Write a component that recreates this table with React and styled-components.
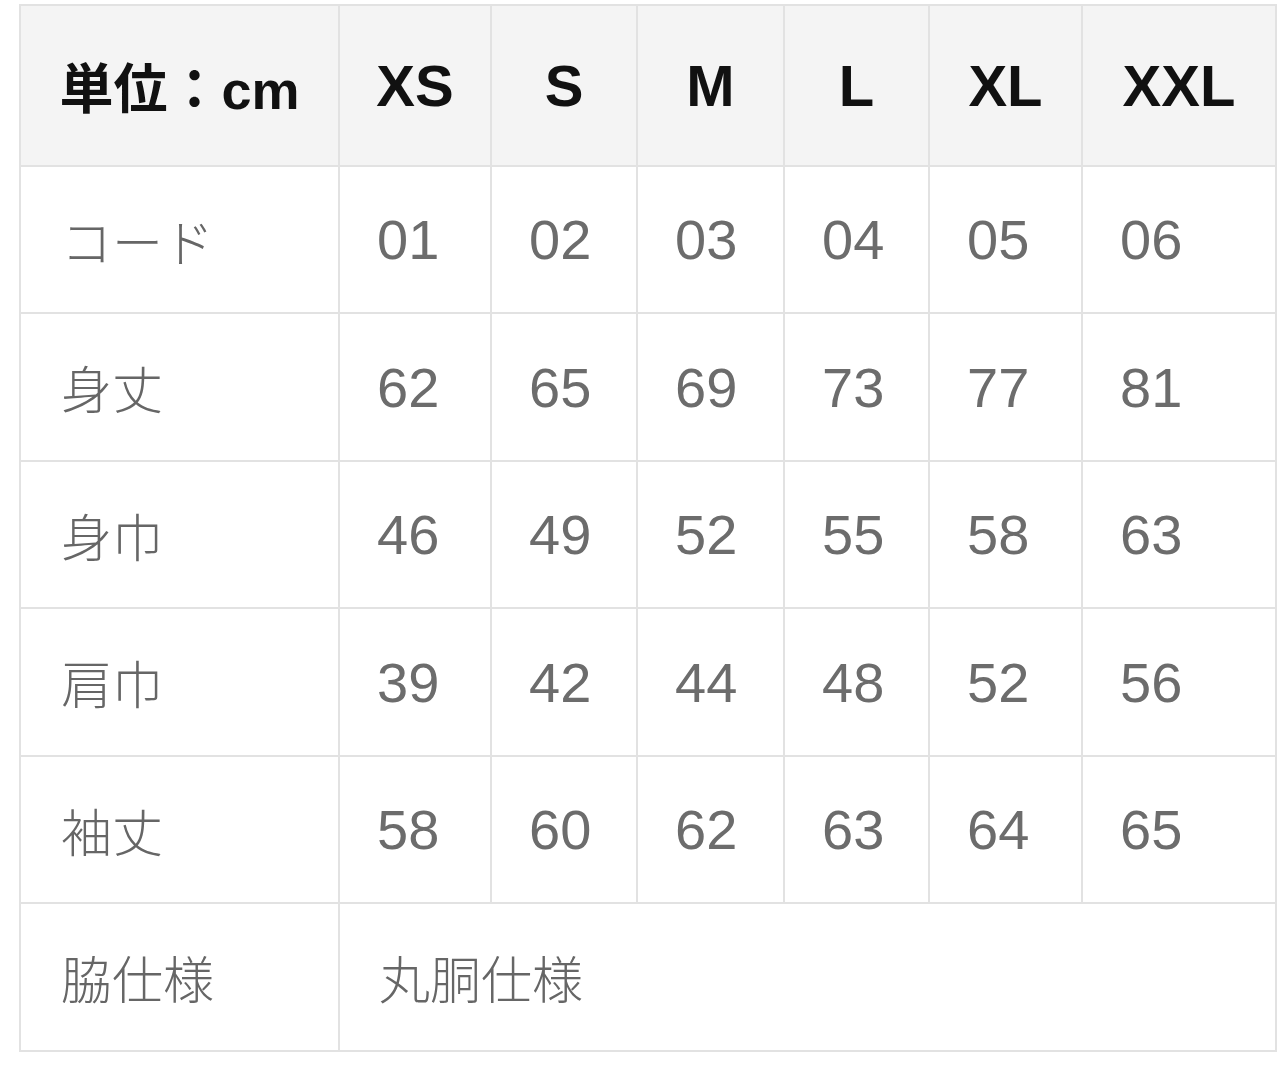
import React from 'react';
import styled, { createGlobalStyle } from 'styled-components';

const GlobalStyle = createGlobalStyle`
  body {
    margin: 0;
    background: #ffffff;
    font-family: "Liberation Sans", "Noto Sans CJK JP", sans-serif;
  }
`

const Wrapper = styled.div`
  padding: 4px 0 0 19px;
`

const SizeTable = styled.table`
  width: 1256px;
  table-layout: fixed;
  border-collapse: collapse;
  border: 2px solid #e2e2e2;
`

const HeadRow = styled.tr`
  height: 161px;
  background: #f4f4f4;
`

const BodyRow = styled.tr`
  height: ${props => props.h}px;
  background: #ffffff;
`

const HeadCell = styled.th`
  border: 2px solid #e2e2e2;
  padding: 0;
  text-align: center;
  font-family: "Liberation Sans", "Noto Sans CJK JP", sans-serif;
  font-weight: bold;
  font-size: ${props => props.small ? 54 : 58}px;
  color: #111;
  white-space: nowrap;
`

const LabelCell = styled.td`
  border: 2px solid #e2e2e2;
  padding: 0 0 0 40px;
  text-align: left;
  font-family: "Noto Sans CJK JP", sans-serif;
  font-weight: 300;
  font-size: 51px;
  color: #666;
  white-space: nowrap;
`

const ValueCell = styled.td`
  border: 2px solid #e2e2e2;
  padding: 0 0 0 37px;
  text-align: left;
  font-family: "Liberation Sans", "Noto Sans CJK JP", sans-serif;
  font-size: 56px;
  color: #6c6c6c;
  white-space: nowrap;
`

const SpecCell = styled(ValueCell)`
  padding-left: 39px;
  font-family: "Noto Sans CJK JP", sans-serif;
  font-weight: 300;
  font-size: 51px;
  color: #666;
`

const widths = [319, 152, 146, 147, 145, 153, 194]
const sizes = ['XS', 'S', 'M', 'L', 'XL', 'XXL']

const rows = [
  { label: 'コード', values: ['01', '02', '03', '04', '05', '06'], h: 147 },
  { label: '身丈', values: ['62', '65', '69', '73', '77', '81'], h: 148 },
  { label: '身巾', values: ['46', '49', '52', '55', '58', '63'], h: 147 },
  { label: '肩巾', values: ['39', '42', '44', '48', '52', '56'], h: 148 },
  { label: '袖丈', values: ['58', '60', '62', '63', '64', '65'], h: 147 },
]

export default function App() {
  return (
    <Wrapper>
      <GlobalStyle />
      <SizeTable>
        <colgroup>
          {widths.map((w, i) => <col key={i} style={{ width: w }} />)}
        </colgroup>
        <thead>
          <HeadRow>
            <HeadCell small>単位：cm</HeadCell>
            {sizes.map(s => <HeadCell key={s}>{s}</HeadCell>)}
          </HeadRow>
        </thead>
        <tbody>
          {rows.map(row => (
            <BodyRow key={row.label} h={row.h}>
              <LabelCell>{row.label}</LabelCell>
              {row.values.map((v, i) => <ValueCell key={i}>{v}</ValueCell>)}
            </BodyRow>
          ))}
          <BodyRow h={148}>
            <LabelCell>脇仕様</LabelCell>
            <SpecCell colSpan={6}>丸胴仕様</SpecCell>
          </BodyRow>
        </tbody>
      </SizeTable>
    </Wrapper>
  );
}
